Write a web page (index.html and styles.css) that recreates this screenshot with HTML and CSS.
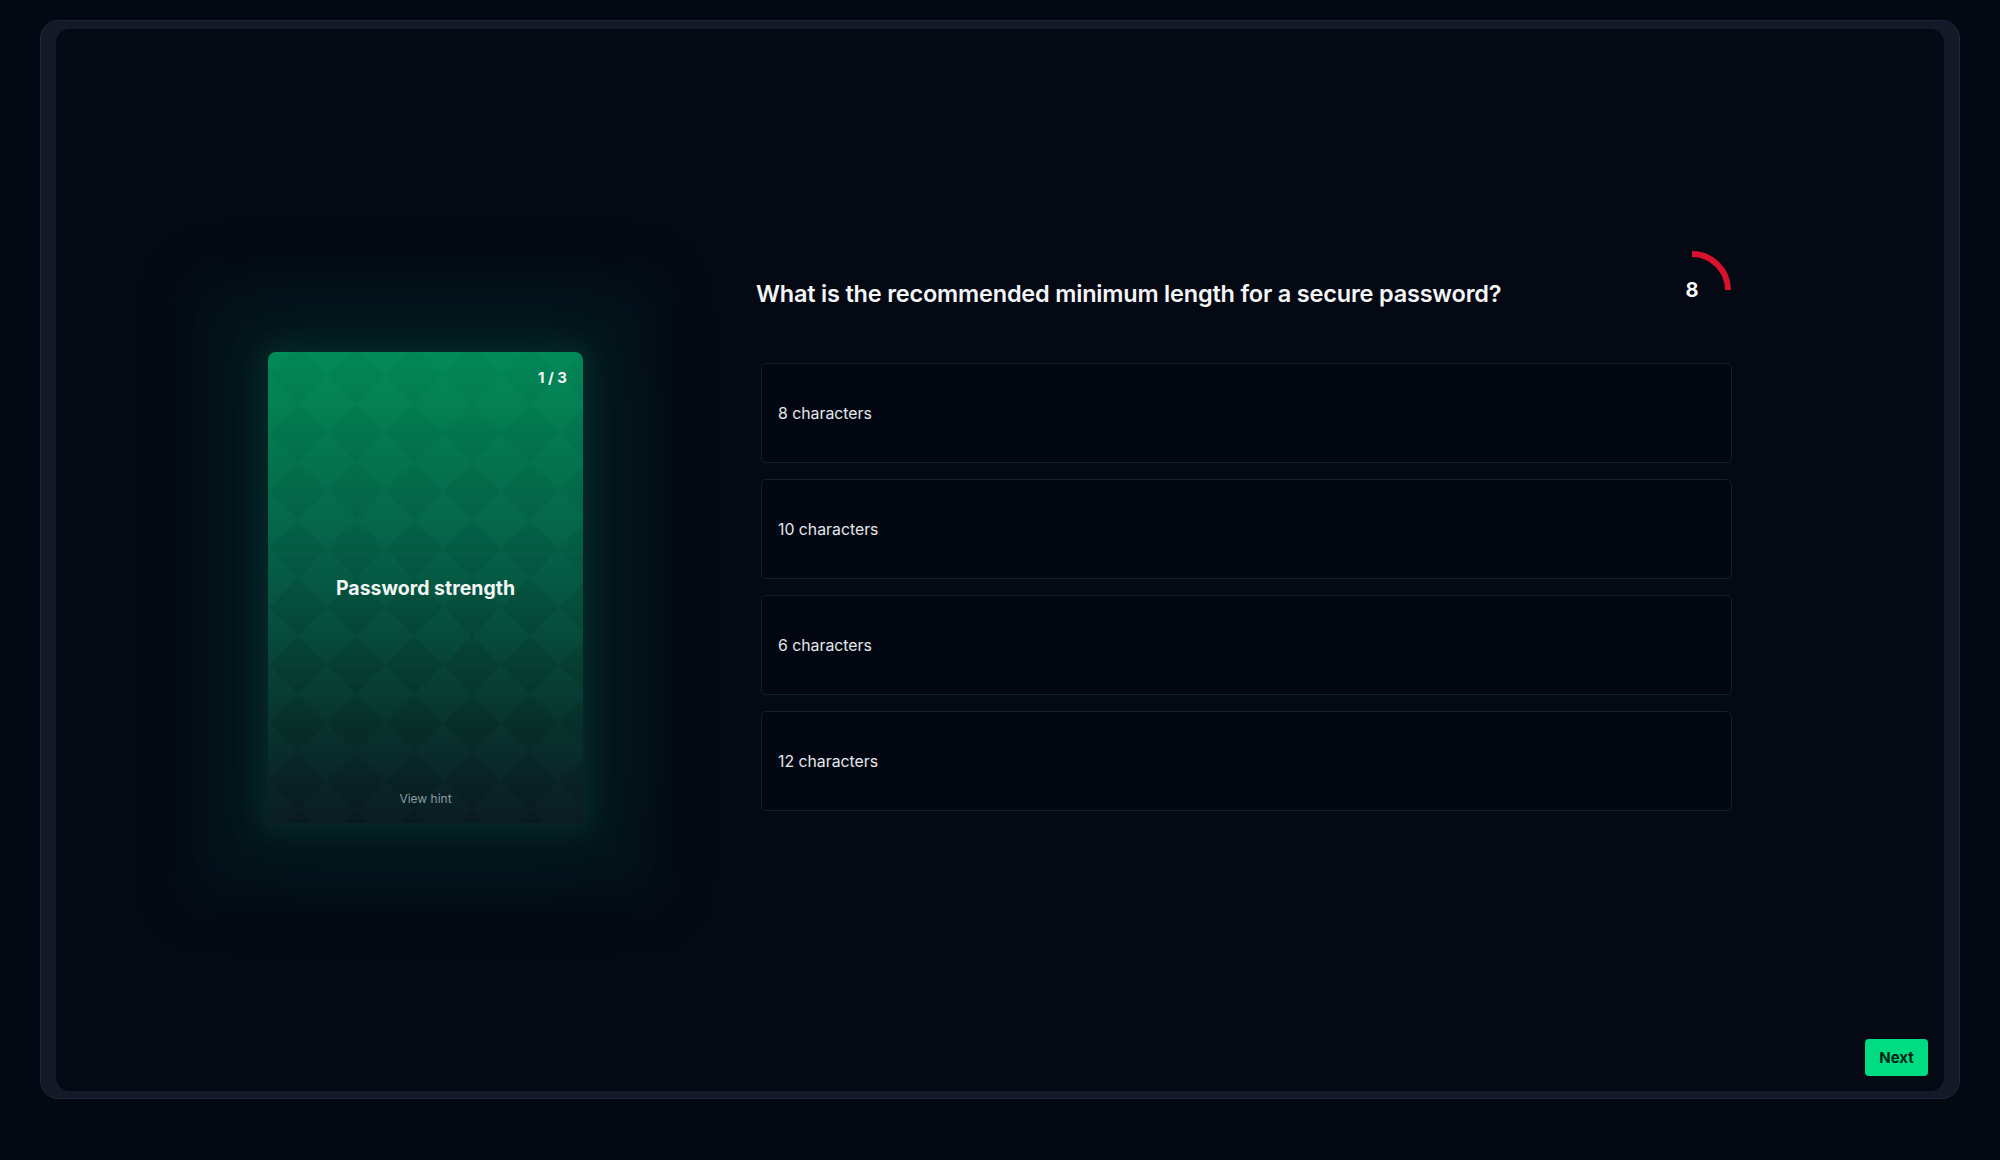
FILE: index.html
```html
<!DOCTYPE html>
<html lang="en">
<head>
<meta charset="utf-8">
<title>Quiz</title>
<link rel="stylesheet" href="styles.css">
</head>
<body>
<div class="frame">
  <div class="panel">
    <main class="main">
      <section class="stage">
        <div class="card">
          <svg class="pattern" width="315" height="471" aria-hidden="true">
            <defs>
              <pattern id="dia" width="58" height="58" patternUnits="userSpaceOnUse" x="1" y="-6">
                <polygon points="29,0 58,29 29,58 0,29" fill="rgba(0,0,0,0.09)"/>
              </pattern>
            </defs>
            <rect width="315" height="471" fill="url(#dia)"/>
          </svg>
          <div class="counter">1 / 3</div>
          <div class="card-title">Password strength</div>
          <div class="hint">View hint</div>
        </div>
      </section>
      <section class="quiz">
        <div class="q-head">
          <h1 class="question">What is the recommended minimum length for a secure password?</h1>
          <div class="timer">
            <svg width="80" height="80" viewBox="0 0 80 80" aria-hidden="true">
              <circle cx="40" cy="40" r="36" fill="none" stroke="#d8112c" stroke-width="6" stroke-dasharray="56.55 400" transform="rotate(-90 40 40)"/>
            </svg>
            <span class="timer-num">8</span>
          </div>
        </div>
        <div class="options">
          <div class="option">8 characters</div>
          <div class="option">10 characters</div>
          <div class="option">6 characters</div>
          <div class="option">12 characters</div>
        </div>
      </section>
    </main>
    <footer class="footer">
      <button class="next">Next</button>
    </footer>
  </div>
</div>
</body>
</html>
```
FILE: styles.css
```css
html, body {
  margin: 0;
  padding: 0;
  background: #030812;
}
body {
  font-family: Inter, "Noto Sans", sans-serif;
  color: #eef1f4;
  width: 2000px;
  height: 1160px;
  overflow: hidden;
}
.frame {
  margin: 20px 40px 0;
  height: 1079px;
  box-sizing: border-box;
  border-radius: 18px;
  background: #121a28;
  border: 1px solid #1d283b;
  padding: 8px 15px 7px;
}
.panel {
  height: 100%;
  border-radius: 14px;
  background: #040913;
  display: flex;
  flex-direction: column;
}
.main {
  flex: 1;
  display: flex;
  align-items: flex-start;
  padding: 221px 0 0 212px;
}
.stage {
  width: 315px;
  margin-top: 102px;
}
.card {
  position: relative;
  height: 471px;
  border-radius: 8px 8px 2px 2px;
  overflow: hidden;
  background: linear-gradient(180deg, #038b5a 0%, #04774f 20%, #05654a 38%, #065340 54%, #073f33 70%, #092e2c 84%, #0a2226 94%, #0a1d22 100%);
  box-shadow:
    0 0 24px 8px rgba(8, 80, 66, 0.30),
    0 0 70px 34px rgba(7, 62, 56, 0.26),
    0 0 44px 84px rgba(8, 36, 42, 0.28);
  display: grid;
  grid-template-rows: auto 1fr auto;
}
.pattern {
  position: absolute;
  left: 0;
  top: 0;
  -webkit-mask-image: linear-gradient(180deg, rgba(0,0,0,0.25) 0%, rgba(0,0,0,0.6) 45%, #000 80%);
  mask-image: linear-gradient(180deg, rgba(0,0,0,0.25) 0%, rgba(0,0,0,0.6) 45%, #000 80%);
}
.counter {
  position: relative;
  text-align: right;
  padding: 17px 16px 0;
  font-weight: 700;
  font-size: 15px;
  line-height: 18px;
  color: #f3f6f5;
}
.card-title {
  position: relative;
  display: flex;
  align-items: center;
  justify-content: center;
  font-weight: 700;
  font-size: 19.5px;
  color: #f2f5f4;
  padding-bottom: 2px;
}
.hint {
  position: relative;
  text-align: center;
  font-size: 12px;
  line-height: 15px;
  color: #8a9ca6;
  padding-bottom: 17px;
}
.quiz {
  width: 976px;
  margin-left: 173px;
}
.q-head {
  height: 80px;
  display: flex;
  align-items: center;
  justify-content: space-between;
}
.question {
  margin: 6px 0 0;
  font-size: 23.5px;
  font-weight: 600;
  letter-spacing: -0.2px;
  color: #f3f5f7;
}
.timer {
  position: relative;
  width: 80px;
  height: 80px;
}
.timer svg {
  display: block;
}
.timer-num {
  position: absolute;
  left: 0;
  top: 0;
  width: 80px;
  height: 80px;
  display: flex;
  align-items: center;
  justify-content: center;
  font-weight: 700;
  font-size: 20px;
  color: #f5f7f8;
}
.options {
  margin-top: 33px;
  padding-left: 5px;
  display: flex;
  flex-direction: column;
  gap: 16px;
}
.option {
  height: 100px;
  box-sizing: border-box;
  border: 1px solid #141f2c;
  border-radius: 5px;
  background: #030711;
  display: flex;
  align-items: center;
  padding-left: 16px;
  font-size: 15.8px;
  color: #e4e8ec;
}
.footer {
  display: flex;
  justify-content: flex-end;
  padding: 0 16px 15px;
}
.next {
  width: 63px;
  height: 37px;
  border: none;
  border-radius: 4px;
  background: #00dc82;
  color: #04261a;
  font-family: Inter, sans-serif;
  font-weight: 700;
  font-size: 15px;
  padding: 0;
}
```
